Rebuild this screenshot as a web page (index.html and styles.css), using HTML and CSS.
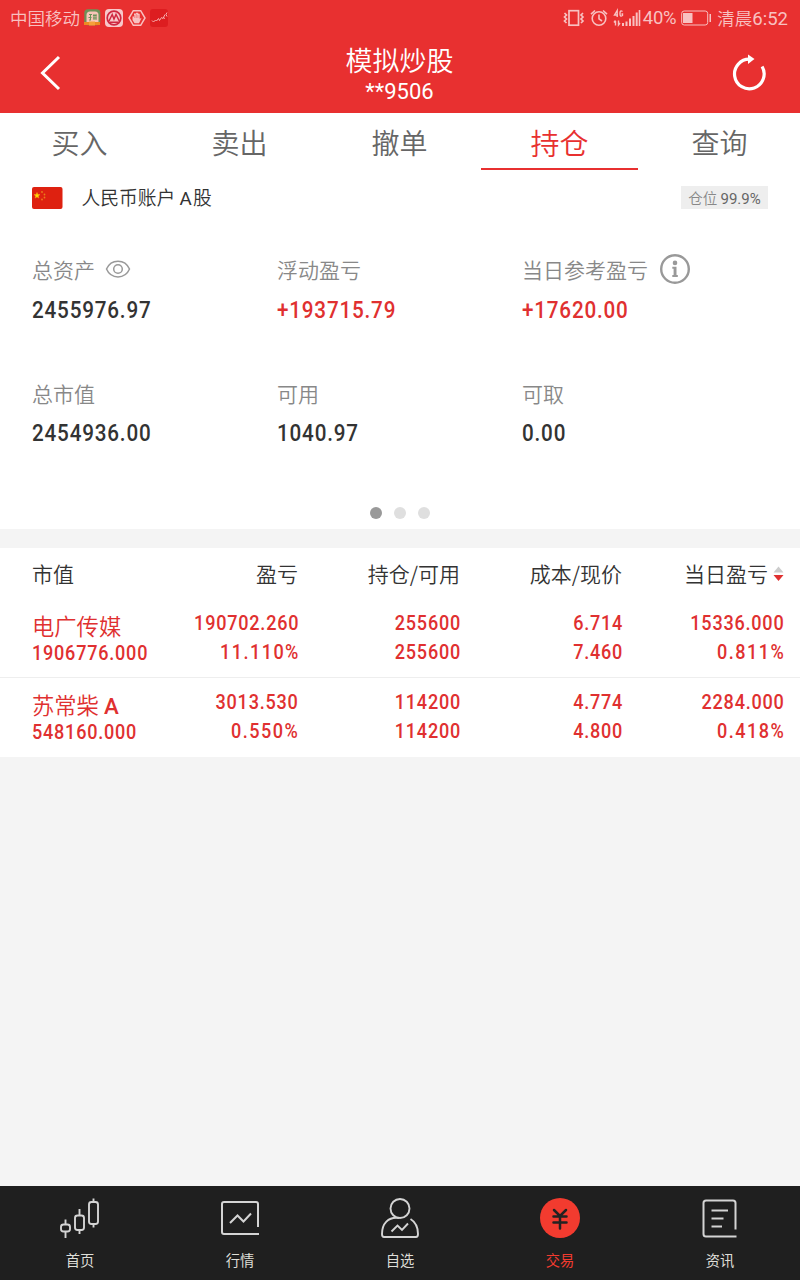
FILE: index.html
```html
<!DOCTYPE html>
<html lang="zh-CN">
<head>
<meta charset="utf-8">
<title>模拟炒股</title>
<link rel="stylesheet" href="styles.css">
</head>
<body>
<header class="header">
  <div class="status">
    <span class="carrier">中国移动</span>
    <div class="apps">
      <svg width="17" height="18" viewBox="0 0 17 18"><rect x=".3" y=".3" width="16" height="16" rx="3.500" fill="#6d9258"/><path d="M2.500 15V6Q2.500 2.500 6 2.500h5q3.500 0 3.500 3.500v9z" fill="#f8c5b8"/><path d="M5 5.500h3M6.500 5.500V11M4.500 8.500h3M5 11h2M10 5v6M12 5v6M9 6.500h3.500M9 9h3.500" stroke="#6d9258" fill="none"/><path d="M0 13h16v3H0z" fill="#ed8b22"/><path d="M5 12.500h6v4H5z" fill="#f6a03a"/></svg>
      <svg width="18" height="18" viewBox="0 0 18 18"><rect width="18" height="18" rx="4" fill="#f8c8ca"/><circle cx="9" cy="9" r="6.800" fill="none" stroke="#cf2740" stroke-width="1.700"/><path d="M4 12 7.200 5.500 9 10l2-4.500 3.300 6.500M4.500 13.300h9" fill="none" stroke="#cf2740" stroke-width="1.500"/></svg>
      <svg width="18" height="18" viewBox="0 0 18 18"><path d="M5.300 1.700h7.400L17 9l-4.300 7.300H5.300L1 9z" fill="none" stroke="#f8c1c1" stroke-width="1.500"/><path d="M4.500 7.500V11l2 3.200h4.500l2.500-5.200-1.800.8V4.700h-1.400V3.800H8v.7H6v3z" fill="#f8c1c1"/><path d="M6.700 6v3M8.300 5v4M9.900 6v3" stroke="#e83030" stroke-width=".4"/></svg>
      <svg width="18" height="18" viewBox="0 0 18 18"><rect width="18" height="18" rx="3" fill="#dd1d20"/><path d="m2 11.500 1.500 1.500 2-2 1 1 2-2.500 1 2 2-3 1.500 1 2-4M13 8.500l2 1M17 3.500q-2 2 0 4" fill="none" stroke="#f6b0b0"/></svg>
    </div>
    <div class="sys">
      <svg width="22" height="18" viewBox="0 0 22 18" fill="none" stroke="#f8c1c1"><rect x="6" y="1.700" width="9.500" height="14.500" stroke-width="1.700"/><path d="m1.500 4 2 2-2 2 2 2-2 2 2 2M20 4l-2 2 2 2-2 2 2 2-2 2" stroke-width="1.700"/></svg>
      <svg class="alarm" width="18" height="18" viewBox="0 0 18 18" fill="none" stroke="#f8c1c1" stroke-width="1.600"><circle cx="9" cy="9.500" r="6.800"/><path d="M9 5.500v4.300l3 2.200M1 5.200 5 1.500M17 5.200 13 1.500"/></svg>
      <svg class="signal" width="28" height="18" viewBox="0 0 28 18"><path d="M4.200 8V1.500L1.500 6H5M9.500 2.500Q7 .5 7 4.500T9.500 6.500V5H8.500" fill="none" stroke="#f8c1c1" stroke-width="1.400"/><path d="M2.500 16.500V12M1 13.500l1.500-2M5.500 11.500v4.500l1.500-2" fill="none" stroke="#f8c1c1" stroke-width="1.400"/><path d="M9 14h2v3H9zM12.500 12.500h2V17h-2zM16 9.500h2V17h-2zM19.500 7h2v10h-2zM22.700 3.500h2V17h-2zM25.700 1h1.600v16h-1.600z" fill="#f8c1c1"/></svg>
      <span class="pct">40%</span>
      <svg class="battery" width="31" height="16" viewBox="0 0 31 16"><rect x=".7" y="1" width="26" height="14" rx="2.500" fill="none" stroke="#f8c1c1"/><path d="M2 3h9.500v10H2zM28.500 4H30v8h-1.500z" fill="#f8c1c1"/></svg>
      <span class="clock">清晨<b>6:52</b></span>
    </div>
  </div>
  <div class="titlebar">
    <svg class="back" width="28" height="40" viewBox="0 0 28 40"><path d="M21 4 4.500 20 21 36" fill="none" stroke="#fff" stroke-width="3"/></svg>
    <div class="titles"><h1>模拟炒股</h1><p>**9506</p></div>
    <svg class="refresh" width="36" height="40" viewBox="0 0 36 40"><path d="M31.100 14.500A14.800 14.800 0 1 1 19 7.200" fill="none" stroke="#fff" stroke-width="3.200"/><path d="M17 2.500 23.500 7 17 12z" fill="#fff"/></svg>
  </div>
</header>

<nav class="tabs">
  <a>买入</a><a>卖出</a><a>撤单</a><a class="active">持仓</a><a>查询</a>
</nav>

<section class="summary">
  <div class="account">
    <svg class="flag" width="31" height="22" viewBox="0 0 31 22"><rect width="30.500" height="22" rx="2" fill="#de2110"/><path d="m5 5.500.8 2 2.200.1-1.700 1.400.6 2.100L5 9.900l-1.900 1.200.6-2.100L2 7.600l2.200-.1z" fill="#ffde00" stroke="#f9a010" stroke-width=".5"/><g fill="#eb7d1a"><circle cx="10" cy="5" r=".9"/><circle cx="12.500" cy="7.500" r=".9"/><circle cx="12.500" cy="10.500" r=".9"/><circle cx="10" cy="12.500" r=".9"/></g></svg>
    <span class="account-name">人民币账户 <i>A</i>股</span>
    <span class="badge">仓位 <b>99.9%</b></span>
  </div>
  <div class="stats">
    <div class="stat"><div class="label"><span>总资产</span><svg class="eye" width="26" height="20" viewBox="0 0 26 20" fill="none" stroke="#999" stroke-width="1.500"><path d="M1.500 10C6-.5 20-.5 24.500 10 20 20.500 6 20.500 1.500 10z"/><circle cx="13" cy="10" r="4.300"/></svg></div><span class="num">2455976.97</span></div>
    <div class="stat"><div class="label"><span>浮动盈亏</span></div><span class="num up">+193715.79</span></div>
    <div class="stat"><div class="label"><span>当日参考盈亏</span><svg class="info" width="30" height="30" viewBox="0 0 30 30"><circle cx="15" cy="15" r="13.800" fill="none" stroke="#999" stroke-width="2.400"/><circle cx="15" cy="8.900" r="2.300" fill="#999"/><path d="M12.300 12.700h4.200v8.200h1.300v2h-5.500v-2h1.300v-6.200h-1.300z" fill="#999"/></svg></div><span class="num up">+17620.00</span></div>
    <div class="stat"><div class="label"><span>总市值</span></div><span class="num">2454936.00</span></div>
    <div class="stat"><div class="label"><span>可用</span></div><span class="num">1040.97</span></div>
    <div class="stat"><div class="label"><span>可取</span></div><span class="num">0.00</span></div>
  </div>
  <div class="dots"><i class="on"></i><i></i><i></i></div>
</section>

<section class="holdings">
  <div class="row head">
    <span>市值</span><span>盈亏</span><span>持仓/可用</span><span>成本/现价</span>
    <span class="sort">当日盈亏<svg width="11" height="16" viewBox="0 0 11 16"><path d="M5.500.5 10.500 6.500H.5z" fill="#ccc"/><path d="M.5 9h10l-5 6z" fill="#e03030"/></svg></span>
  </div>
  <div class="row">
    <div class="cell"><span class="stock">电广传媒</span><span class="num">1906776.000</span></div>
    <div class="cell"><span class="num">190702.260</span><span class="num percent">11.110%</span></div>
    <div class="cell"><span class="num">255600</span><span class="num">255600</span></div>
    <div class="cell"><span class="num">6.714</span><span class="num">7.460</span></div>
    <div class="cell"><span class="num">15336.000</span><span class="num percent">0.811%</span></div>
  </div>
  <div class="row">
    <div class="cell"><span class="stock">苏常柴 <i>A</i></span><span class="num">548160.000</span></div>
    <div class="cell"><span class="num">3013.530</span><span class="num percent">0.550%</span></div>
    <div class="cell"><span class="num">114200</span><span class="num">114200</span></div>
    <div class="cell"><span class="num">4.774</span><span class="num">4.800</span></div>
    <div class="cell"><span class="num">2284.000</span><span class="num percent">0.418%</span></div>
  </div>
</section>

<nav class="bottom">
  <a><svg width="44" height="44" viewBox="0 0 44 44" fill="none" stroke="#d4d4d4" stroke-width="1.900"><rect x="3" y="24.500" width="9" height="7" rx="2.500"/><path d="M7.500 19.500v5M7.500 31.500v6.500M21.500 9v6.500M21.500 30v4M35.500-1.500v4M35.500 24v3.500"/><rect x="17" y="15.500" width="9" height="14.500" rx="2.500"/><rect x="31" y="2" width="9" height="22" rx="2.500"/></svg>首页</a>
  <a><svg width="44" height="44" viewBox="0 0 44 44" fill="none" stroke="#d4d4d4" stroke-width="2"><path d="M40 27V4q0-2-2-2H6Q4 2 4 4v28q0 2 2 2h35"/><path d="m12 23 7.500-7.500 6 6 7.500-8"/></svg>行情</a>
  <a><svg width="44" height="44" viewBox="0 0 44 44" fill="none" stroke="#d4d4d4" stroke-width="1.900"><circle cx="22" cy="8.500" r="9.500"/><path d="M21 18C10 16.500 4 24 4 34q0 3 2 3h32q2 0 2-3c0-6-1-11-7.500-15"/><path d="m13.500 31.500 6-6 4.500 4.500 6-6.500"/></svg>自选</a>
  <a class="active"><svg width="44" height="44" viewBox="0 0 44 44"><circle cx="22" cy="18" r="20" fill="#f23b2f"/><path d="m16 10 6 6 6-6M15.500 16.500h13M15.500 22.500h13M22 16v12.500" fill="none" stroke="#222" stroke-width="2.500" stroke-linecap="round"/></svg>交易</a>
  <a><svg width="44" height="44" viewBox="0 0 44 44" fill="none" stroke="#d4d4d4" stroke-width="2"><path d="M37.500 29.500V3q0-2.500-2.500-2.500H8Q5.500.5 5.500 3v31q0 2.500 2.500 2.500h30.500M13.500 10.500H30M13.500 18.500h12M13.500 26.500h10.500"/></svg>资讯</a>
</nav>
</body>
</html>
```
FILE: styles.css
```css
* { box-sizing: border-box; }
body {
  margin: 0;
  width: 800px;
  height: 1280px;
  display: flex;
  flex-direction: column;
  background: #f4f4f4;
  color: #333;
  font-family: "Noto Sans CJK SC", sans-serif;
  font-weight: 350;
}
svg { display: block; flex: none; overflow: visible; }
i { font-style: normal; }
b { font-weight: 400; }

.header { height: 113px; background: #e83030; color: #fff; }
.status {
  height: 36px;
  padding: 0 12px 0 10px;
  display: flex;
  align-items: center;
  color: #f8c1c1;
  font-size: 17.5px;
  line-height: 36px;
}
.apps { display: flex; gap: 4.5px; margin-left: 3.5px; }
.sys { display: flex; align-items: center; margin-left: auto; }
.alarm { margin-left: 5px; }
.signal { margin-left: 5px; }
.pct { margin-left: 2px; font: 400 18.5px/34px Roboto, sans-serif; letter-spacing: -.3px; }
.battery { margin-left: 5px; }
.clock { margin-left: 5px; white-space: nowrap; }
.clock b { font-family: Roboto, sans-serif; font-size: 18.5px; }

.titlebar {
  height: 77px;
  padding: 0 33px 0 38px;
  display: flex;
  justify-content: space-between;
  align-items: flex-start;
}
.back { margin-top: 17px; }
.refresh { margin-top: 16px; }
.titles { text-align: center; padding: 7px 0 0 2px; }
.titles h1 { margin: 0; font-size: 27px; line-height: 34px; font-weight: 350; }
.titles p { margin: 0; font: 400 22px/30px Roboto, sans-serif; }

.tabs { height: 57px; display: flex; background: #fff; }
.tabs a {
  margin: 0 2px 0 1px;
  text-align: center;
  font-size: 28px;
  line-height: 59px;
  color: #666;
  flex: 1;
}
.tabs .active { color: #e83030; font-size: 29px; border-bottom: 2px solid #e83030; }

.summary { height: 359px; background: #fff; padding-left: 32px; }
.account { height: 56px; padding-right: 32px; display: flex; align-items: center; }
.account-name { margin-left: 18.5px; font-size: 18.8px; line-height: 24px; }
.account-name i { margin-right: 1px; font-family: Roboto, sans-serif; font-weight: 400; }
.badge {
  margin: 0 0 1px auto;
  width: 87px;
  height: 23px;
  background: #eee;
  color: #888;
  font-size: 14.5px;
  line-height: 23px;
  text-align: center;
  white-space: nowrap;
}
.badge b { font-family: Roboto, sans-serif; font-size: 15px; color: #666; }
.stats {
  display: grid;
  grid-template-columns: repeat(3, 245px);
  grid-auto-rows: 124px;
  padding-top: 28px;
}
.label { display: flex; align-items: center; height: 30px; font-size: 21px; color: #888; }
.label span { line-height: 30px; }
.eye { margin-left: 10px; }
.info { margin-left: 12px; }
.num {
  display: block;
  width: max-content;
  font: 500 24px/50px Roboto, sans-serif;
  letter-spacing: .95px;
  transform: scaleX(.86);
  transform-origin: left;
}
.stat:nth-child(-n+3) .num { padding-top: 1px; }
.up { color: #e03030; }
.dots { display: flex; gap: 12px; padding: 5px 0 0 338px; }
.dots i { width: 12px; height: 12px; border-radius: 50%; background: #dfdfdf; }
.dots .on { background: #999; }

.holdings { margin-top: 19px; background: #fff; }
.row {
  display: grid;
  grid-template-columns: 128px 138px 162px 162px 162px;
  height: 79px;
  padding: 11px 16px 0 32px;
  color: #e03030;
}
.row + .row + .row { border-top: 1px solid #eee; height: 80px; padding-top: 10px; }
.row.head { height: 50px; padding-top: 0; color: #333; font-size: 21px; line-height: 50px; text-align: right; }
.head span:first-child { text-align: left; }
.sort { display: flex; justify-content: flex-end; align-items: center; gap: 5px; }
.sort svg { margin-top: 2px; }
.cell { display: flex; flex-direction: column; align-items: flex-end; }
.cell .num { font-size: 21px; line-height: 29px; letter-spacing: .9px; margin-right: -.8px; transform-origin: right; }
.cell .percent { letter-spacing: 1.7px; margin-right: -1.6px; }
.cell:first-child { align-items: flex-start; }
.cell:first-child .num { transform-origin: left; line-height: 28px; }
.stock { font-size: 22.3px; line-height: 32px; height: 30px; white-space: nowrap; }
.stock i { font-family: Roboto, sans-serif; font-weight: 500; }

.bottom { margin-top: auto; height: 94px; display: flex; background: #1f1f1f; }
.bottom a {
  flex: 1;
  display: flex;
  flex-direction: column;
  align-items: center;
  padding-top: 14px;
  font-size: 14.3px;
  line-height: 32px;
  font-weight: 400;
  color: #deded8;
}
.bottom .active { color: #f23b2f; }
```
